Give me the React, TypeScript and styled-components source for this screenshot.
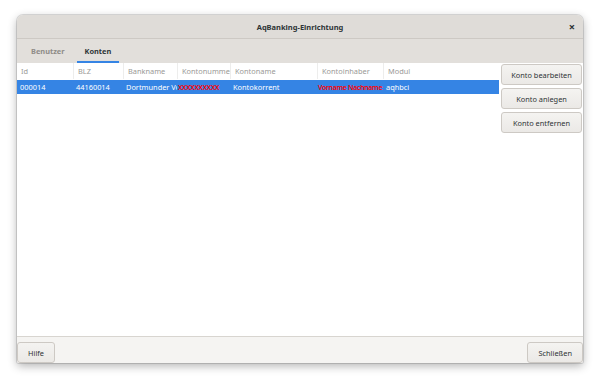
import styled, { createGlobalStyle } from "styled-components";

const GlobalStyle = createGlobalStyle`
  html, body {
    margin: 0;
    padding: 0;
    background: #ffffff;
  }
  body {
    font-family: "Noto Sans", "DejaVu Sans", sans-serif;
    font-size: 7.4px;
    color: #2e3436;
  }
`;

const columns = [
  { key: "id", title: "Id", width: 56 },
  { key: "blz", title: "BLZ", width: 50 },
  { key: "bank", title: "Bankname", width: 54 },
  { key: "nummer", title: "Kontonummer", width: 53 },
  { key: "name", title: "Kontoname", width: 87 },
  { key: "inhaber", title: "Kontoinhaber", width: 66 },
  { key: "modul", title: "Modul", width: 116 },
];

const rows = [
  {
    id: "000014",
    blz: "44160014",
    bank: "Dortmunder Volksbank",
    nummer: "XXXXXXXXXX",
    name: "Kontokorrent",
    inhaber: "Vorname Nachname",
    modul: "aqhbci",
  },
];

const redColumns = ["nummer", "inhaber"];

const App = () => {
  const template = columns.map((c) => `${c.width}px`).join(" ");

  return (
    <Page>
      <GlobalStyle />
      <Window>
        <TitleBar>
          <span />
          <Title>AqBanking-Einrichtung</Title>
          <CloseButton>×</CloseButton>
        </TitleBar>
        <TabBar>
          <Tab>Benutzer</Tab>
          <Tab $active>Konten</Tab>
        </TabBar>
        <Body>
          <Table>
            <HeaderRow style={{ gridTemplateColumns: template }}>
              {columns.map((c, i) => (
                <HeaderCell key={c.key} $first={i === 0}>
                  {c.title}
                </HeaderCell>
              ))}
            </HeaderRow>
            {rows.map((r) => (
              <Row key={r.id} $selected style={{ gridTemplateColumns: template }}>
                {columns.map((c) => (
                  <Cell key={c.key} $red={redColumns.includes(c.key)}>
                    {r[c.key as keyof typeof r]}
                  </Cell>
                ))}
              </Row>
            ))}
          </Table>
          <Sidebar>
            <Button>Konto bearbeiten</Button>
            <Button>Konto anlegen</Button>
            <Button>Konto entfernen</Button>
          </Sidebar>
        </Body>
        <Footer>
          <FooterButton>Hilfe</FooterButton>
          <FooterButton>Schließen</FooterButton>
        </Footer>
      </Window>
    </Page>
  );
};

const Page = styled.div`
  width: 600px;
  height: 382px;
  box-sizing: border-box;
  padding: 15px 17px 19px 17px;
  display: flex;
`;

const Window = styled.div`
  flex: 1;
  display: flex;
  flex-direction: column;
  border-radius: 6px 6px 2px 2px;
  overflow: hidden;
  background: #f5f4f2;
  box-shadow: 0 3px 10px rgba(0, 0, 0, 0.3), 0 0 0 1px rgba(0, 0, 0, 0.12);
`;

const TitleBar = styled.div`
  height: 23px;
  display: grid;
  grid-template-columns: 1fr auto 1fr;
  align-items: center;
  background: #dfdcd8;
  border-bottom: 1px solid #cdc9c4;
`;

const Title = styled.div`
  font-weight: bold;
  font-size: 7.5px;
  color: #2e3436;
`;

const CloseButton = styled.div`
  justify-self: end;
  margin-right: 8px;
  font-weight: bold;
  font-size: 11px;
  line-height: 1;
  color: #2e3436;
`;

const TabBar = styled.div`
  height: 24px;
  display: flex;
  align-items: stretch;
  padding-left: 4px;
  background: #e2dfdb;
`;

const Tab = styled.div<{ $active?: boolean }>`
  display: flex;
  align-items: center;
  padding: 2px 8px 0 8px;
  margin: 0 2px;
  font-weight: bold;
  color: ${(p) => (p.$active ? "#2e3436" : "#8f8c88")};
  border-bottom: 2px solid ${(p) => (p.$active ? "#3584e4" : "transparent")};
`;

const Body = styled.div`
  flex: 1;
  display: flex;
  background: #ffffff;
  border-bottom: 1px solid #d8d5d0;
`;

const Table = styled.div`
  width: 482px;
  display: flex;
  flex-direction: column;
`;

const HeaderRow = styled.div`
  display: grid;
  height: 16px;
  margin-bottom: 1px;
  align-items: stretch;
`;

const HeaderCell = styled.div<{ $first?: boolean }>`
  display: flex;
  align-items: center;
  padding-left: 4px;
  overflow: hidden;
  white-space: nowrap;
  color: #9a9996;
  border-left: ${(p) => (p.$first ? "none" : "1px solid #ededec")};
`;

const Row = styled.div<{ $selected?: boolean }>`
  display: grid;
  height: 14px;
  align-items: center;
  background: ${(p) => (p.$selected ? "#3584e4" : "transparent")};
  color: ${(p) => (p.$selected ? "#ffffff" : "#2e3436")};
`;

const Cell = styled.div<{ $red?: boolean }>`
  padding-left: ${(p) => (p.$red ? "1px" : "3px")};
  overflow: hidden;
  white-space: nowrap;
  color: ${(p) => (p.$red ? "#ff0000" : "inherit")};
  font-weight: ${(p) => (p.$red ? 600 : "normal")};
  font-size: ${(p) => (p.$red ? "7px" : "inherit")};
  letter-spacing: ${(p) => (p.$red ? "-0.35px" : "normal")};
`;

const Sidebar = styled.div`
  flex: 1;
  display: flex;
  flex-direction: column;
  gap: 3px;
  padding: 1px 1px 0 2px;
`;

const Button = styled.div`
  height: 21px;
  display: flex;
  align-items: center;
  justify-content: center;
  border: 1px solid #cdc9c4;
  border-radius: 3px;
  box-sizing: border-box;
  background: linear-gradient(#f4f3f1, #ebe9e6);
  color: #2e3436;
`;

const Footer = styled.div`
  height: 26px;
  display: flex;
  justify-content: space-between;
  align-items: flex-end;
  background: #f5f4f2;
`;

const FooterButton = styled(Button)`
  padding: 0 10px;
`;

export default App;
